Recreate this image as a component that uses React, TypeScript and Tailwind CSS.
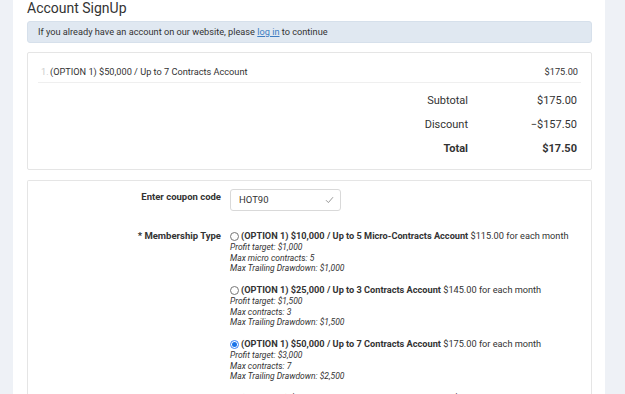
import React from "react";

type Plan = {
  title: string;
  price: string;
  lines: string[];
  checked?: boolean;
};

const plans: Plan[] = [
  {
    title: "(OPTION 1) $10,000 / Up to 5 Micro-Contracts Account",
    price: "$115.00",
    lines: ["Profit target: $1,000", "Max micro contracts: 5", "Max Trailing Drawdown: $1,000"],
  },
  {
    title: "(OPTION 1) $25,000 / Up to 3 Contracts Account",
    price: "$145.00",
    lines: ["Profit target: $1,500", "Max contracts: 3", "Max Trailing Drawdown: $1,500"],
  },
  {
    title: "(OPTION 1) $50,000 / Up to 7 Contracts Account",
    price: "$175.00",
    lines: ["Profit target: $3,000", "Max contracts: 7", "Max Trailing Drawdown: $2,500"],
    checked: true,
  },
  {
    title: "(OPTION 1) $100,000 / Up to 12 Contracts Account",
    price: "$215.00",
    lines: ["Profit target: $6,000", "Max contracts: 12", "Max Trailing Drawdown: $3,500"],
  },
];

const Radio = ({ checked }: { checked?: boolean }) =>
  checked ? (
    <span className="mr-[2px] mt-[1.5px] flex h-[9px] w-[9px] shrink-0 items-center justify-center rounded-full border border-[#3b82f6] bg-white">
      <span className="h-[5px] w-[5px] rounded-full bg-[#1a73e8]" />
    </span>
  ) : (
    <span className="mr-[2px] mt-[1.5px] h-[9px] w-[9px] shrink-0 rounded-full border border-[#767676] bg-white" />
  );

const App: React.FC = () => {
  return (
    <div
      className="flex h-[394px] w-[625px] overflow-hidden bg-[#eef1f6] text-[#333]"
      style={{ fontFamily: "Roboto, 'Liberation Sans', sans-serif" }}
    >
      <div className="w-[13px] shrink-0" />
      <div className="flex w-[592px] shrink-0 flex-col bg-white pl-[14px] pr-[13px]">
        <h1 className="mt-[-2px] h-[23px] shrink-0 text-[14px] leading-[20px] text-[#333]">Account SignUp</h1>

        {/* login notice */}
        <div className="h-[22px] shrink-0 rounded-[3px] border border-[#d6e0eb] bg-[#e0e8f1] pl-[10px] text-[9.2px] leading-[20px]">
          If you already have an account on our website, please{" "}
          <a className="text-[#3d7dc2] underline">log in</a> to continue
        </div>

        {/* cart */}
        <div className="mt-[9px] h-[118px] shrink-0 rounded-[2px] border border-[#e5e5e5] px-[10px]">
          <div className="flex h-[30px] items-end justify-between border-b border-[#efefef] pb-[3px] text-[9.2px]">
            <div className="flex">
              <span className="w-[12px] pl-[3px] text-[#ccc]">1.</span>
              <span>(OPTION 1) $50,000 / Up to 7 Contracts Account</span>
            </div>
            <span className="pr-[3px]">$175.00</span>
          </div>
          <div className="mt-[6px] flex flex-col text-[11px]">
            <div className="flex h-[24px] items-center justify-end">
              <span className="w-[100px] text-right">Subtotal</span>
              <span className="w-[113px] pr-[4px] text-right">$175.00</span>
            </div>
            <div className="flex h-[24px] items-center justify-end">
              <span className="w-[100px] text-right">Discount</span>
              <span className="w-[113px] pr-[4px] text-right">&minus;$157.50</span>
            </div>
            <div className="flex h-[24px] items-center justify-end font-bold">
              <span className="w-[100px] text-right">Total</span>
              <span className="w-[113px] pr-[4px] text-right">$17.50</span>
            </div>
          </div>
        </div>

        {/* form */}
        <div className="mt-[10px] flex-1 rounded-t-[2px] border border-b-0 border-[#e5e5e5] pt-[8px]">
          <div className="flex">
            <label className="w-[193px] pt-[1px] text-right text-[9.5px] font-bold">Enter coupon code</label>
            <div className="ml-[9px] flex h-[22px] w-[111px] items-center justify-between rounded-[3px] border border-[#d9d9d9] pl-[8px] pr-[6px] text-[9.5px]">
              <span>HOT90</span>
              <svg width="9" height="8" viewBox="0 0 9 8" fill="none">
                <path d="M1 4.2 L3.4 6.6 L8 1.2" stroke="#9a9a9a" strokeWidth="1" />
              </svg>
            </div>
          </div>

          <div className="mt-[19px] flex">
            <label className="w-[193px] text-right text-[9.5px] font-bold leading-[12px]">* Membership Type</label>
            <div className="ml-[9px] flex flex-col">
              {plans.map((p) => (
                <div key={p.price} className="mb-[10.5px]">
                  <div className="flex items-start text-[9.2px] leading-[12px]">
                    <Radio checked={p.checked} />
                    <span className="whitespace-nowrap">
                      <b>{p.title}</b> {p.price} for each month
                    </span>
                  </div>
                  {p.lines.map((l) => (
                    <div key={l} className="text-[8.5px] italic leading-[10.5px]">
                      {l}
                    </div>
                  ))}
                </div>
              ))}
            </div>
          </div>
        </div>
      </div>
    </div>
  );
};

export default App;
